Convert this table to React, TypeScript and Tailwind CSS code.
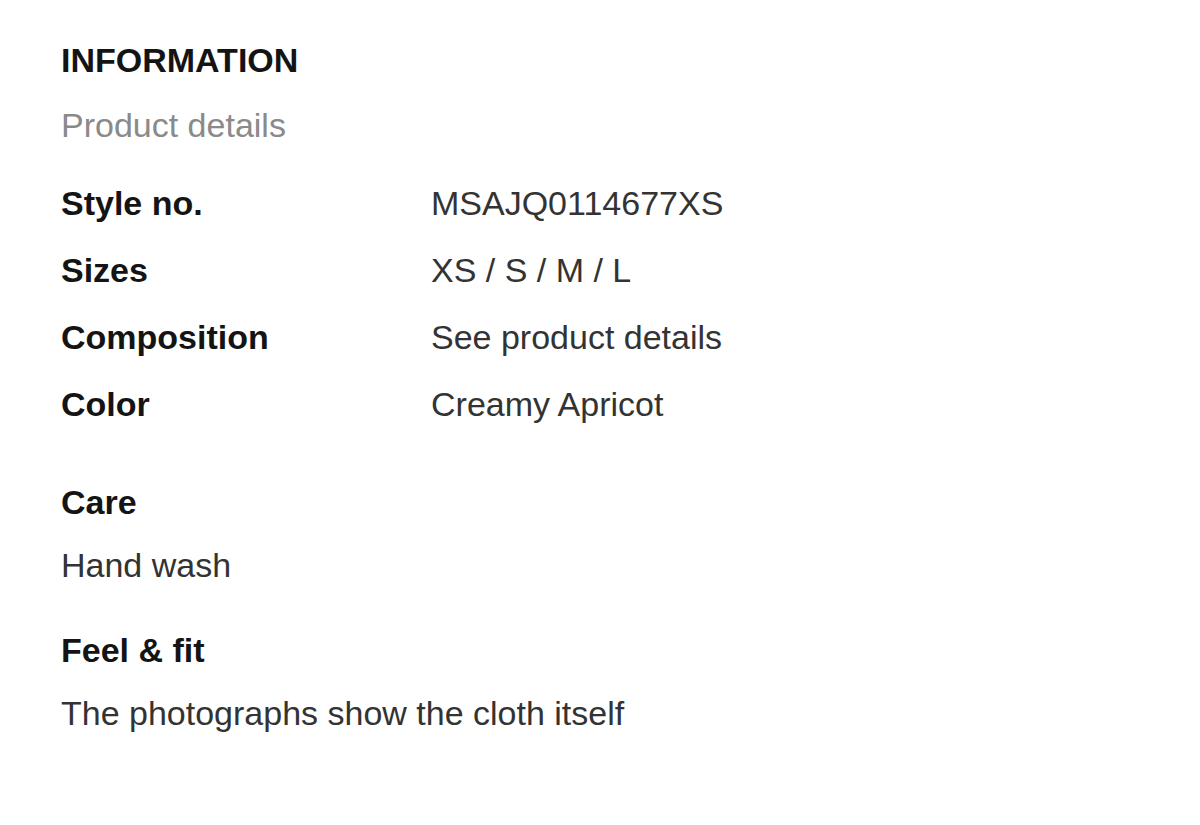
const specs = [
  { label: "Style no.", value: "MSAJQ0114677XS" },
  { label: "Sizes", value: "XS / S / M / L" },
  { label: "Composition", value: "See product details" },
  { label: "Color", value: "Creamy Apricot" },
];

export default function App() {
  return (
    <div className="min-h-[825px] bg-white pl-[61px] pt-[40px] font-['Liberation_Sans',Arial,sans-serif] text-[34px] leading-[40px]">
      <h2 className="font-bold text-[#141414]">INFORMATION</h2>
      <div className="mt-[25px] text-[#8a8a8a]">Product details</div>

      {/* spec table */}
      <div className="mt-[38px] grid grid-cols-[370px_1fr] gap-y-[27px]">
        {specs.map((s) => (
          <div key={s.label} className="contents">
            <div className="font-bold text-[#141414]">{s.label}</div>
            <div className="text-[#333333]">{s.value}</div>
          </div>
        ))}
      </div>

      <div className="mt-[58px] font-bold text-[#141414]">Care</div>
      <div className="mt-[23px] text-[#333333]">Hand wash</div>

      <div className="mt-[45px] font-bold text-[#141414]">Feel &amp; fit</div>
      <div className="mt-[23px] text-[#333333]">The photographs show the cloth itself</div>
    </div>
  );
}
